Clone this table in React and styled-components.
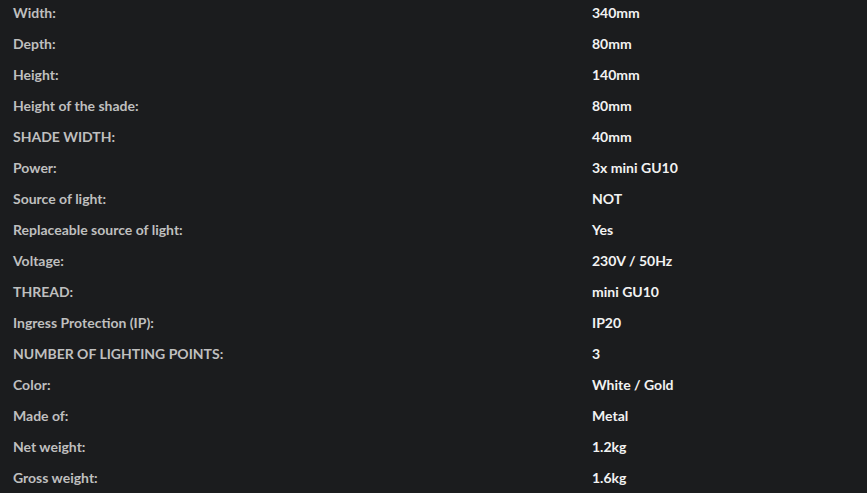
import React from 'react';
import styled, { createGlobalStyle } from 'styled-components';

const GlobalStyle = createGlobalStyle`
	html, body {
		margin: 0;
		padding: 0;
		background: #1b1c1e;
		overflow: hidden;
	}
`;

const SpecTable = styled.div`
	display: flex;
	flex-direction: column;
	margin-top: -3px;
	padding-left: 13px;
	font-family: Lato, 'Open Sans', sans-serif;
`;

const Row = styled.div`
	display: grid;
	grid-template-columns: 579px 1fr;
	align-items: center;
	height: 31px;
`;

const Label = styled.span`
	color: #bfbfbf;
	font-size: 14px;
	font-weight: 700;
`;

const Value = styled.span`
	color: #f2f2f2;
	font-size: 14px;
	font-weight: 700;
`;

const specs = [
	['Width:', '340mm'],
	['Depth:', '80mm'],
	['Height:', '140mm'],
	['Height of the shade:', '80mm'],
	['SHADE WIDTH:', '40mm'],
	['Power:', '3x mini GU10'],
	['Source of light:', 'NOT'],
	['Replaceable source of light:', 'Yes'],
	['Voltage:', '230V / 50Hz'],
	['THREAD:', 'mini GU10'],
	['Ingress Protection (IP):', 'IP20'],
	['NUMBER OF LIGHTING POINTS:', '3'],
	['Color:', 'White / Gold'],
	['Made of:', 'Metal'],
	['Net weight:', '1.2kg'],
	['Gross weight:', '1.6kg']
];

export default function App() {
	return (
		<>
			<GlobalStyle />
			<SpecTable>
				{specs.map(([label, value]) => (
					<Row key={label}>
						<Label>{label}</Label>
						<Value>{value}</Value>
					</Row>
				))}
			</SpecTable>
		</>
	);
}
